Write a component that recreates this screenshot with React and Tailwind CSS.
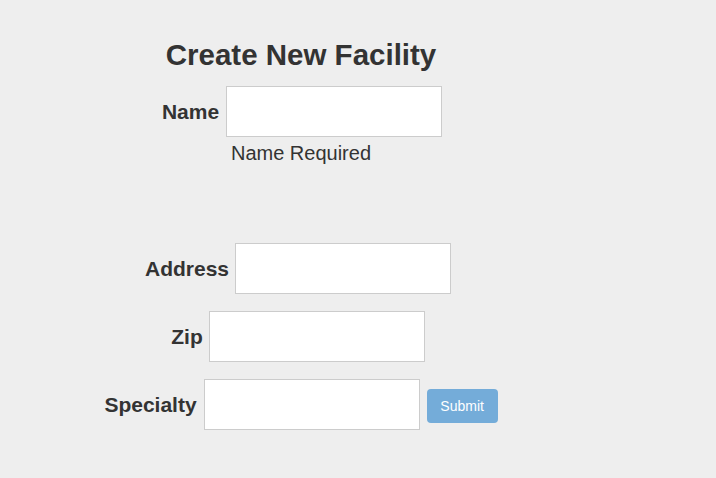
export default function App() {
  const font = { fontFamily: '"Liberation Sans", Arial, sans-serif' };
  return (
    <div className="min-h-[478px] w-full bg-[#eeeeee] text-[#333333]" style={font}>
      <div className="w-[602px] flex flex-col items-center pt-[37px]">
        <h1 className="text-[29.5px] leading-[36px] font-bold">Create New Facility</h1>

        <div className="mt-[13px] ml-[2px] flex items-center gap-[7px]">
          <label className="text-[21px] font-bold">Name</label>
          <input className="w-[216px] h-[51px] bg-white border border-[#cccccc] outline-none" />
        </div>
        <p className="mt-[4px] text-[20px] leading-[24px]">Name Required</p>

        <div className="mt-[78px] mr-[6px] flex items-center gap-[6px]">
          <label className="text-[21px] font-bold">Address</label>
          <input className="w-[216px] h-[51px] bg-white border border-[#cccccc] outline-none" />
        </div>

        <div className="mt-[17px] mr-[6px] flex items-center gap-[6px]">
          <label className="text-[21px] font-bold">Zip</label>
          <input className="w-[216px] h-[51px] bg-white border border-[#cccccc] outline-none" />
        </div>

        <div className="mt-[17px] flex items-center gap-[7px]">
          <label className="text-[21px] font-bold">Specialty</label>
          <input className="w-[216px] h-[51px] bg-white border border-[#cccccc] outline-none" />
          <button className="mt-[3px] w-[71px] h-[34px] rounded-[4px] bg-[#74acd9] text-white text-[14px]">
            Submit
          </button>
        </div>
      </div>
    </div>
  );
}
